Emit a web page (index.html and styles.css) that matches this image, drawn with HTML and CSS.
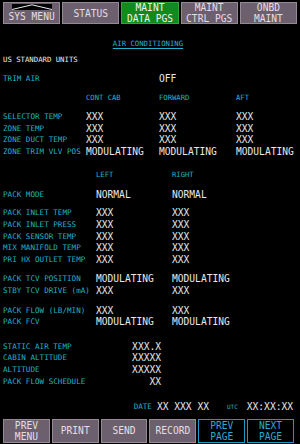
FILE: index.html
```html
<!DOCTYPE html>
<html lang="en">
<head>
    <meta charset="UTF-8">
    <meta name="viewport" content="width=device-width, initial-scale=1.0">
    <title>Air Conditioning - Maint Data</title>
    <link rel="stylesheet" href="styles.css">
</head>
<body>
    <nav class="menu top-menu">
        <button class="key sys-menu">
            <svg class="sys-bar" width="40" height="6" viewBox="0 0 40 6">
                <rect width="40" height="6" fill="#000"/>
                <polyline points="0,5.5 20,0.8 40,5.5" fill="none" stroke="#e8e8e8" stroke-width="1"/>
            </svg>
            <span>SYS MENU</span>
        </button>
        <button class="key"><span>STATUS</span></button>
        <button class="key active"><span>MAINT</span><span>DATA PGS</span></button>
        <button class="key"><span>MAINT</span><span>CTRL PGS</span></button>
        <button class="key"><span>ONBD</span><span>MAINT</span></button>
    </nav>

    <main class="page">
        <h1 class="page-title"><span>AIR CONDITIONING</span></h1>
        <div class="units">US STANDARD UNITS</div>

        <!-- trim air / zones -->
        <div class="zone-grid trim">
            <span class="label">TRIM AIR</span><span></span><span class="value">OFF</span>
        </div>
        <div class="zone-grid col-heads">
            <span></span><span class="head">CONT CAB</span><span class="head">FORWARD</span><span class="head">AFT</span>
        </div>
        <div class="zone-grid zone-rows">
            <span class="label">SELECTOR TEMP</span><span class="value">XXX</span><span class="value">XXX</span><span class="value">XXX</span>
            <span class="label">ZONE TEMP</span><span class="value">XXX</span><span class="value">XXX</span><span class="value">XXX</span>
            <span class="label">ZONE DUCT TEMP</span><span class="value">XXX</span><span class="value">XXX</span><span class="value">XXX</span>
            <span class="label">ZONE TRIM VLV POS</span><span class="value">MODULATING</span><span class="value">MODULATING</span><span class="value">MODULATING</span>
        </div>

        <!-- packs -->
        <div class="pack-grid side-heads">
            <span></span><span class="head">LEFT</span><span class="head">RIGHT</span>
        </div>
        <div class="pack-grid pack-mode">
            <span class="label">PACK MODE</span><span class="value">NORMAL</span><span class="value">NORMAL</span>
        </div>
        <div class="pack-grid pack-temps">
            <span class="label">PACK INLET TEMP</span><span class="value">XXX</span><span class="value">XXX</span>
            <span class="label">PACK INLET PRESS</span><span class="value">XXX</span><span class="value">XXX</span>
            <span class="label">PACK SENSOR TEMP</span><span class="value">XXX</span><span class="value">XXX</span>
            <span class="label">MIX MANIFOLD TEMP</span><span class="value">XXX</span><span class="value">XXX</span>
            <span class="label">PRI HX OUTLET TEMP</span><span class="value">XXX</span><span class="value">XXX</span>
        </div>
        <div class="pack-grid pack-tcv">
            <span class="label">PACK TCV POSITION</span><span class="value">MODULATING</span><span class="value">MODULATING</span>
            <span class="label">STBY TCV DRIVE (mA)</span><span class="value">XXX</span><span class="value">XXX</span>
        </div>
        <div class="pack-grid pack-flow">
            <span class="label">PACK FLOW (LB/MIN)</span><span class="value">XXX</span><span class="value">XXX</span>
            <span class="label">PACK FCV</span><span class="value">MODULATING</span><span class="value">MODULATING</span>
        </div>

        <!-- air data -->
        <div class="air-grid">
            <span class="label">STATIC AIR TEMP</span><span class="value">XXX.X</span>
            <span class="label">CABIN ALTITUDE</span><span class="value">XXXXX</span>
            <span class="label">ALTITUDE</span><span class="value">XXXXX</span>
            <span class="label">PACK FLOW SCHEDULE</span><span class="value">XX</span>
        </div>

        <div class="stamp">
            <span class="label">DATE</span>
            <span class="value date">XX XXX XX</span>
            <span class="label utc">UTC</span>
            <span class="value time">XX:XX:XX</span>
        </div>
    </main>

    <nav class="menu bottom-menu">
        <button class="key"><span>PREV</span><span>MENU</span></button>
        <button class="key"><span>PRINT</span></button>
        <button class="key"><span>SEND</span></button>
        <button class="key"><span>RECORD</span></button>
        <button class="key outline"><span>PREV</span><span>PAGE</span></button>
        <button class="key outline"><span>NEXT</span><span>PAGE</span></button>
    </nav>
</body>
</html>
```

FILE: styles.css
```css
body {
    margin: 0;
    height: 444px;
    background-color: #000;
    color: #e8e8e8;
    font-family: "DejaVu Sans Mono", "Liberation Mono", monospace;
    display: flex;
    flex-direction: column;
    overflow: hidden;
}

/* soft keys */
.menu {
    display: flex;
    gap: 2px;
}

.top-menu {
    padding: 2px 3px 0 3px;
}

.bottom-menu {
    margin-top: auto;
    padding: 0 6px 1px 3px;
}

.key {
    flex: 1;
    height: 22px;
    box-sizing: border-box;
    padding: 0;
    border: 1px solid #958996;
    background-color: #6d606e;
    color: #e4dee4;
    font-family: inherit;
    font-size: 9.6px;
    line-height: 11px;
    display: flex;
    flex-direction: column;
    align-items: center;
    justify-content: center;
}

.bottom-menu .key {
    height: 24px;
    line-height: 11.5px;
}

.key.active {
    background-color: #14891e;
    border-color: #33a43d;
    color: #f2f2f2;
}

.key.outline {
    background-color: #000;
    border-color: #1d97c6;
    color: #28acd2;
}

.sys-menu {
    justify-content: flex-start;
    padding-top: 1px;
}

.sys-bar {
    display: block;
    margin-bottom: 1px;
}

/* page body */
.page {
    display: flex;
    flex-direction: column;
}

.page-title {
    margin: 16px 0 0;
    padding-right: 4px;
    font-size: 7.3px;
    font-weight: normal;
    line-height: 8px;
    text-align: center;
    color: #22b4cc;
}

.page-title span {
    text-decoration: underline;
    text-underline-offset: 2px;
}

.units {
    margin-top: 8px;
    padding-left: 3px;
    font-size: 7.3px;
    line-height: 8px;
    color: #eeeeee;
}

.label {
    font-size: 7.6px;
    color: #22b4cc;
    white-space: nowrap;
}

.head {
    font-size: 7.2px;
    color: #22b4cc;
}

.value {
    font-size: 9.6px;
    color: #e8e8e8;
    white-space: nowrap;
}

.zone-grid,
.pack-grid,
.air-grid {
    display: grid;
    align-items: center;
    padding-left: 3px;
    line-height: 12px;
}

.zone-grid {
    grid-template-columns: 83px 73px 77px 1fr;
}

.pack-grid {
    grid-template-columns: 93px 76px 1fr;
}

.air-grid {
    grid-template-columns: 100px 58px;
    margin-top: 13px;
    line-height: 11.7px;
}

.air-grid .value {
    text-align: right;
}

.trim {
    margin-top: 9px;
}

.col-heads {
    margin-top: 7px;
}

.zone-rows {
    margin-top: 7px;
    line-height: 11.5px;
}

.side-heads {
    margin-top: 12px;
}

.pack-mode {
    margin-top: 8px;
}

.pack-temps {
    margin-top: 6px;
    line-height: 11.75px;
}

.pack-tcv {
    margin-top: 7px;
}

.pack-flow {
    margin-top: 8px;
    line-height: 11.5px;
}

.stamp {
    margin-top: 13px;
    padding-right: 7px;
    display: flex;
    justify-content: flex-end;
    align-items: center;
    line-height: 12px;
}

.stamp .date {
    margin-left: 5px;
}

.stamp .utc {
    margin-left: 18px;
    font-size: 6px;
}

.stamp .time {
    margin-left: 9px;
}
```
